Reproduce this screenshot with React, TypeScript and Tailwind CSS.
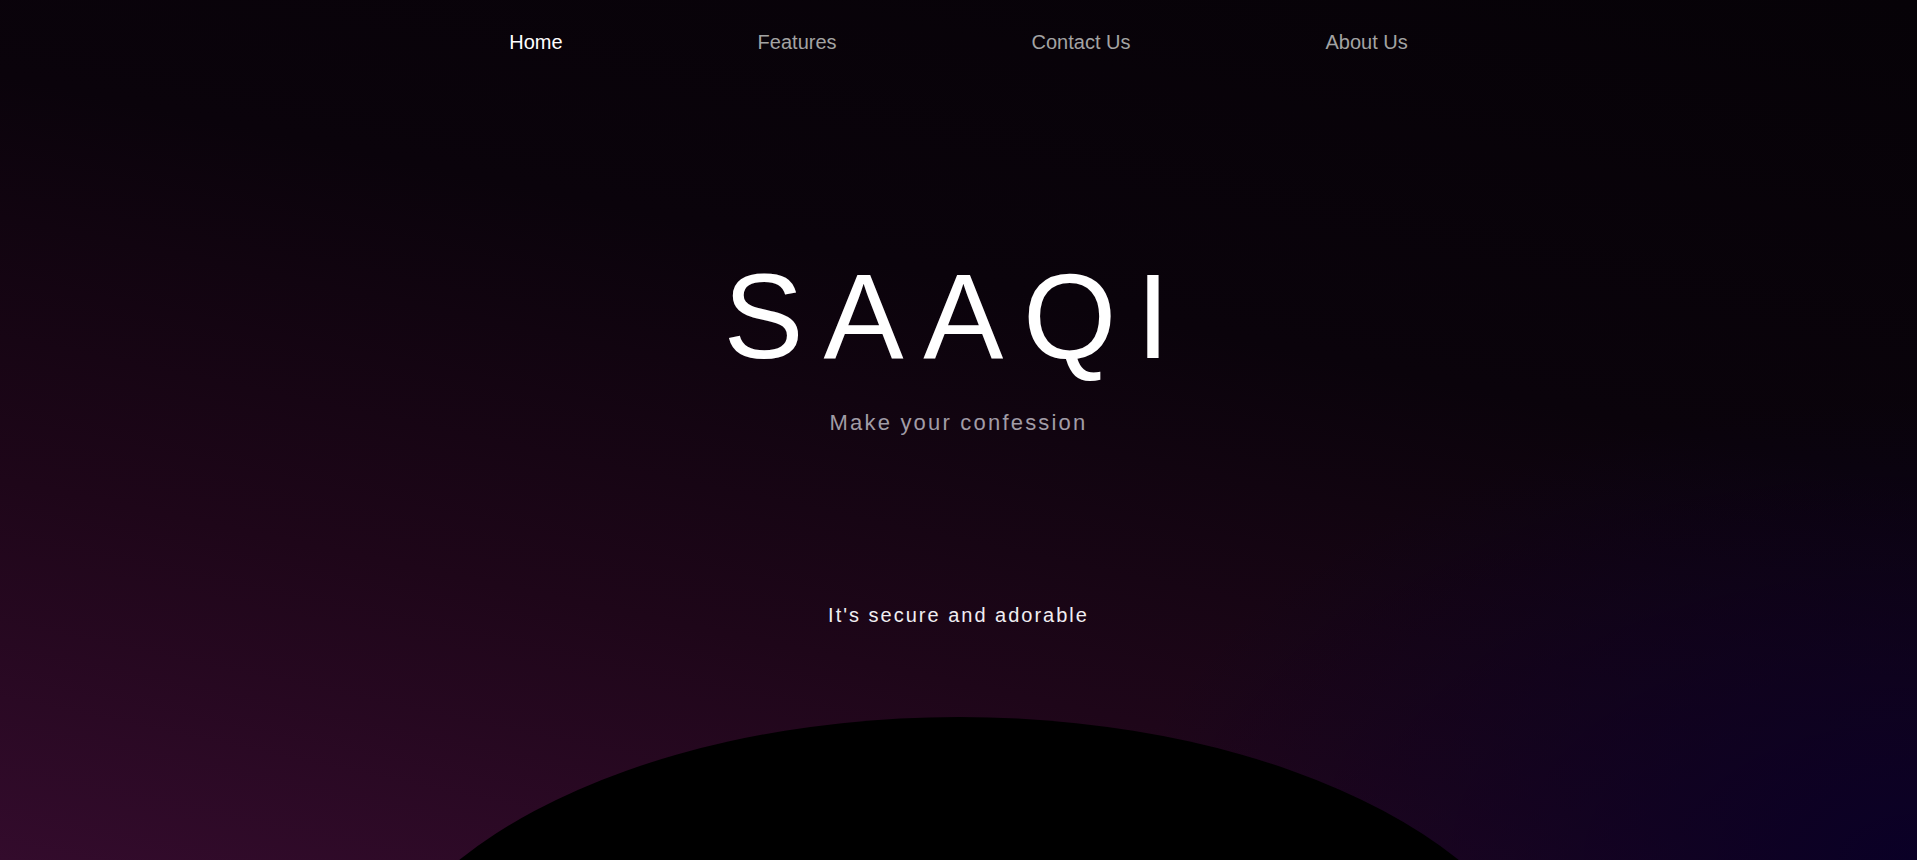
const navLinks = [
  { label: "Home", active: true },
  { label: "Features", active: false },
  { label: "Contact Us", active: false },
  { label: "About Us", active: false },
];

const App = () => {
  return (
    <main
      className="relative w-full h-[860px] overflow-hidden flex flex-col items-center bg-[#050206] font-['Liberation_Sans',Arial,sans-serif]"
    >
      {/* ── BACKGROUND GLOW ── */}
      <div className="absolute inset-0 bg-[linear-gradient(12deg,#330b2c_0%,#1e0619_30%,#0a030b_62%,#060207_100%)]" />
      <div className="absolute inset-0 bg-[radial-gradient(800px_460px_at_100%_100%,#0a0026_0%,rgba(10,0,38,0)_100%)]" />

      {/* ── NAV ── */}
      <nav className="relative flex justify-center gap-[195px] pt-[32px]">
        {navLinks.map((link) => (
          <a
            key={link.label}
            href="#"
            className={`text-[20px] leading-none ${link.active ? "text-white" : "text-[#a3a3a3]"}`}
          >
            {link.label}
          </a>
        ))}
      </nav>

      {/* ── HERO ── */}
      <h1 className="relative mt-[204px] pr-[4px] text-[120px] leading-none tracking-[0.165em] text-white font-normal">
        SAAQI
      </h1>
      <p className="relative mt-[36px] text-[22px] leading-none tracking-[0.1em] text-[#a19ca6]">
        Make your confession
      </p>

      <p className="relative mt-[171px] text-[20px] leading-none tracking-[0.1em] text-[#f0eef2]">
        It's secure and adorable
      </p>

      {/* ── PLANET ── */}
      <div className="relative shrink-0 mt-[92px] w-[1200px] h-[640px] rounded-[50%] bg-black" />
    </main>
  );
};

export default App;
